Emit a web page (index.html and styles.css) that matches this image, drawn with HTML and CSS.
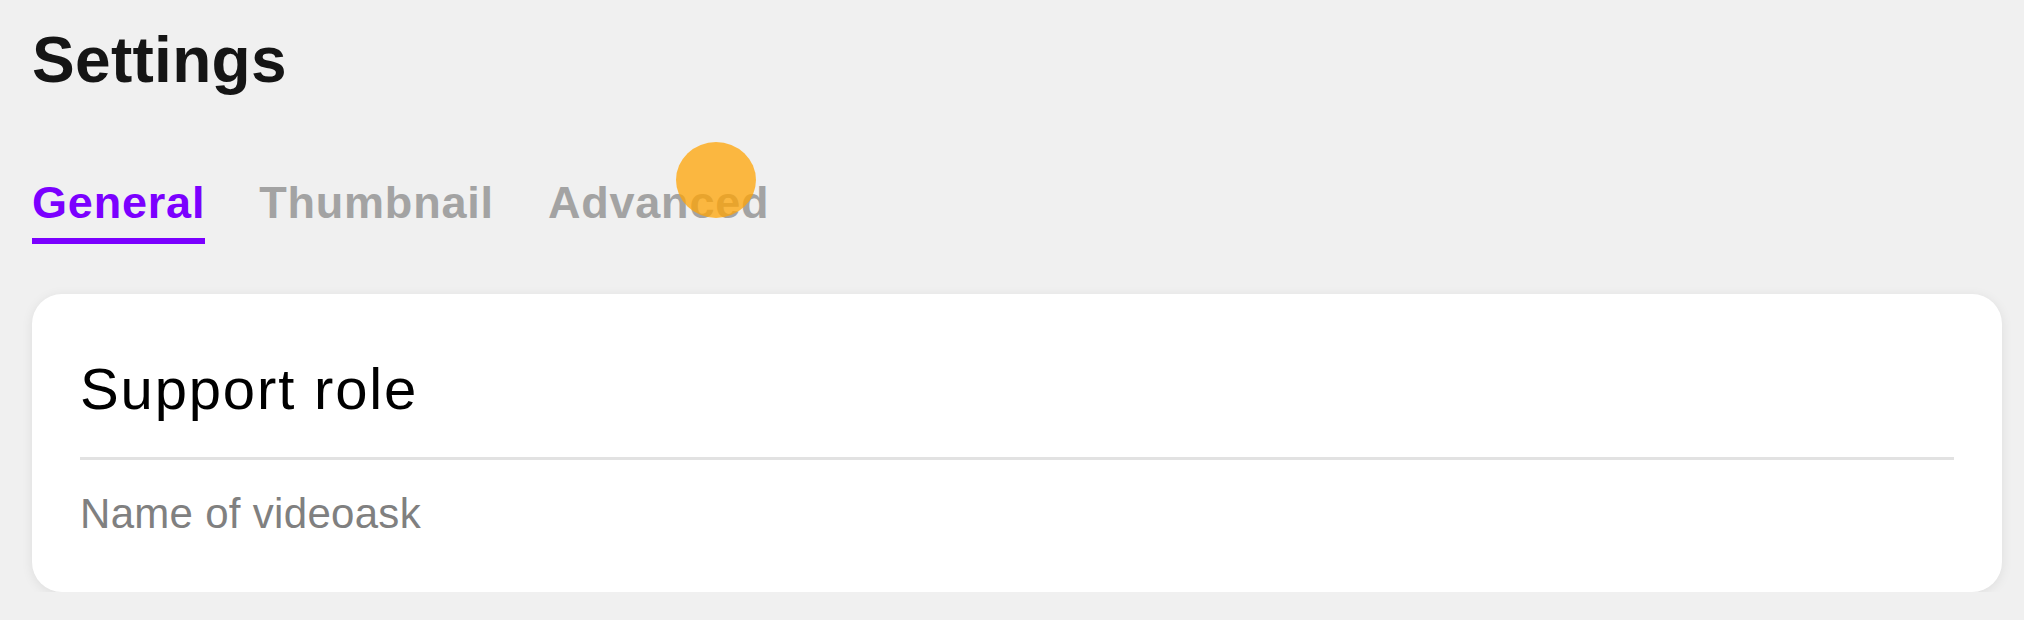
FILE: index.html
```html
<!DOCTYPE html>
<html lang="en">
<head>
<meta charset="utf-8">
<title>Settings</title>
<link rel="stylesheet" href="styles.css">
</head>
<body>
<div class="page">
  <h1 class="title">Settings</h1>
  <nav class="tabs">
    <a class="tab tab-active">General</a>
    <a class="tab">Thumbnail</a>
    <a class="tab">Advanced</a>
  </nav>
  <section class="card">
    <h2 class="card-title">Support role</h2>
    <div class="divider"></div>
    <p class="card-sub">Name of videoask</p>
  </section>
  <div class="pointer"></div>
</div>
</body>
</html>
```

FILE: styles.css
```css
html, body {
  margin: 0;
  padding: 0;
  background: #f0f0f0;
  font-family: "Liberation Sans", Arial, sans-serif;
}

.page {
  position: relative;
  padding: 28px 22px 0 32px;
}

.title {
  margin: 0;
  font-size: 64px;
  line-height: 64px;
  font-weight: 700;
  letter-spacing: 0.3px;
  color: #151515;
}

.tabs {
  display: flex;
  gap: 54px;
  margin-top: 88px;
}

.tab {
  display: block;
  font-size: 45px;
  line-height: 45px;
  font-weight: 700;
  letter-spacing: 0.8px;
  color: #a3a3a3;
  padding-bottom: 13px;
  border-bottom: 6px solid transparent;
}

.tab-active {
  color: #7b00ff;
  border-bottom-color: #7b00ff;
}

.card {
  margin-top: 50px;
  background: #ffffff;
  border-radius: 30px;
  box-shadow: 0 2px 12px rgba(0, 0, 0, 0.08);
  padding: 66px 48px 57px 48px;
}

.card-title {
  margin: 0;
  font-size: 58px;
  line-height: 58px;
  font-weight: 400;
  letter-spacing: 1.85px;
  color: #000000;
}

.divider {
  margin-top: 39px;
  height: 3px;
  background: #e2e2e2;
}

.card-sub {
  margin: 33px 0 0 0;
  font-size: 42px;
  line-height: 42px;
  letter-spacing: 0.3px;
  color: #808080;
}

.pointer {
  position: absolute;
  left: 676px;
  top: 142px;
  width: 80px;
  height: 76px;
  border-radius: 50%;
  background: rgba(255, 164, 5, 0.75);
}
```
